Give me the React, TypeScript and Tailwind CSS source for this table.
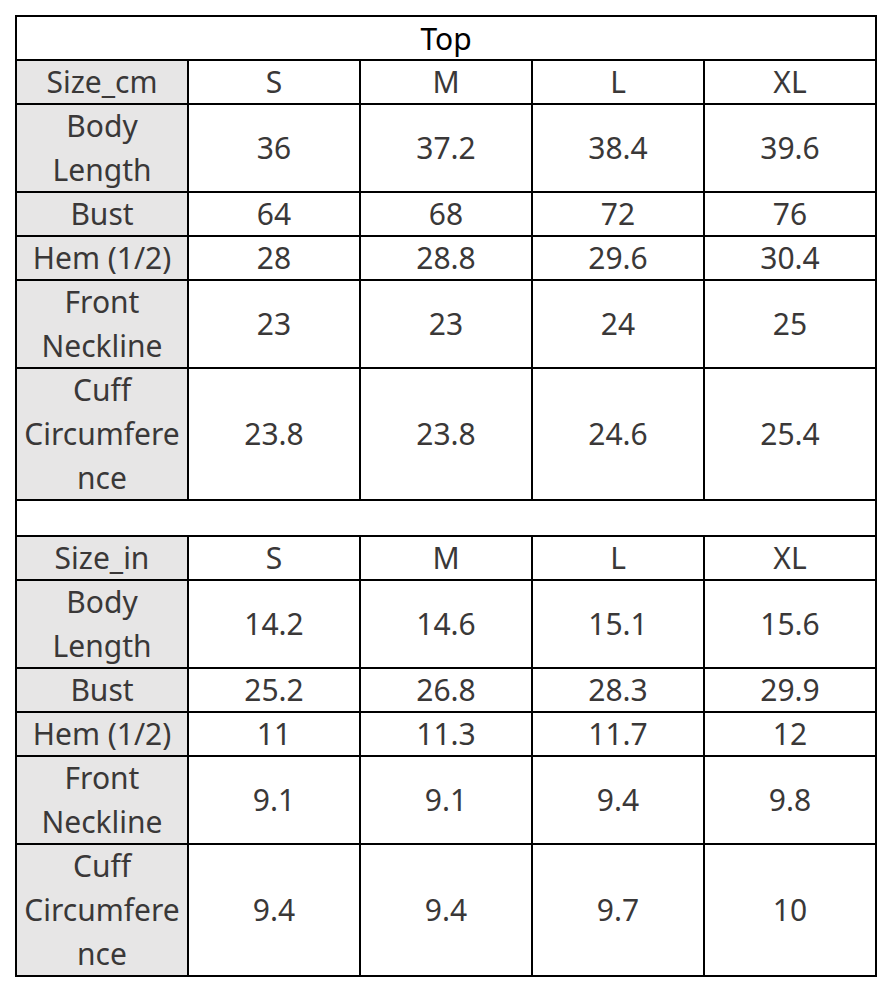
import React from "react";

const COLS = ["S", "M", "L", "XL"];

type Row = { label: string[]; values: string[]; h: string };

const cmRows: Row[] = [
  { label: ["Body", "Length"], values: ["36", "37.2", "38.4", "39.6"], h: "h-[86px]" },
  { label: ["Bust"], values: ["64", "68", "72", "76"], h: "h-[42px]" },
  { label: ["Hem (1/2)"], values: ["28", "28.8", "29.6", "30.4"], h: "h-[42px]" },
  { label: ["Front", "Neckline"], values: ["23", "23", "24", "25"], h: "h-[86px]" },
  { label: ["Cuff", "Circumfere", "nce"], values: ["23.8", "23.8", "24.6", "25.4"], h: "h-[130px]" },
];

const inRows: Row[] = [
  { label: ["Body", "Length"], values: ["14.2", "14.6", "15.1", "15.6"], h: "h-[86px]" },
  { label: ["Bust"], values: ["25.2", "26.8", "28.3", "29.9"], h: "h-[42px]" },
  { label: ["Hem (1/2)"], values: ["11", "11.3", "11.7", "12"], h: "h-[42px]" },
  { label: ["Front", "Neckline"], values: ["9.1", "9.1", "9.4", "9.8"], h: "h-[86px]" },
  { label: ["Cuff", "Circumfere", "nce"], values: ["9.4", "9.4", "9.7", "10"], h: "h-[130px]" },
];

function Cell({ children, gray, h }: { children: React.ReactNode; gray?: boolean; h: string }) {
  return (
    <div
      className={`${h} flex flex-col items-center justify-center text-center leading-[44px] ${
        gray ? "bg-[#e7e6e6]" : "bg-white"
      }`}
    >
      {children}
    </div>
  );
}

function Section({ unit, rows }: { unit: string; rows: Row[] }) {
  return (
    <>
      <Cell gray h="h-[42px]">{unit}</Cell>
      {COLS.map((c) => (
        <Cell key={c} h="h-[42px]">{c}</Cell>
      ))}
      {rows.map((r) => (
        <React.Fragment key={r.label.join(" ")}>
          <Cell gray h={r.h}>
            {r.label.map((l) => (
              <span key={l}>{l}</span>
            ))}
          </Cell>
          {r.values.map((v, i) => (
            <Cell key={i} h={r.h}>{v}</Cell>
          ))}
        </React.Fragment>
      ))}
    </>
  );
}

export default function App() {
  return (
    <div className="min-h-[992px] bg-white pt-[15px] pl-[15px]">
      <div
        className="grid w-[862px] grid-cols-[repeat(5,170px)] gap-[2px] bg-black p-[2px] text-[30px] text-[#3a3838]"
        style={{ fontFamily: '"Noto Sans", "Open Sans", sans-serif' }}
      >
        <div className="col-span-5 flex h-[42px] items-center justify-center bg-white text-black">Top</div>
        <Section unit="Size_cm" rows={cmRows} />
        <div className="col-span-5 h-[34px] bg-white" />
        <Section unit="Size_in" rows={inRows} />
      </div>
    </div>
  );
}
